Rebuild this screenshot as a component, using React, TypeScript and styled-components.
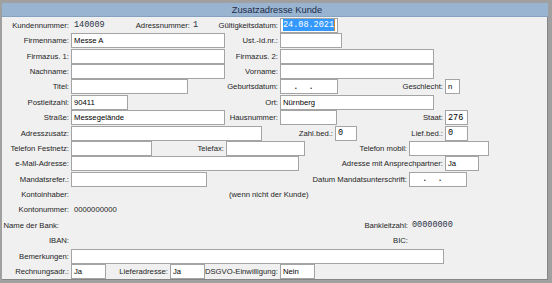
import styled, { createGlobalStyle } from 'styled-components';

const GlobalStyle = createGlobalStyle`
  html, body {
    margin: 0;
    padding: 0;
    background: #a0a0a0;
    overflow: hidden;
  }
  * {
    box-sizing: border-box;
  }
`;

const Window = styled.div`
  width: 552px;
  height: 283px;
  padding: 3px 4px 3px 2px;
  background: #a0a0a0;
  display: flex;
  flex-direction: column;
  font-family: 'Liberation Sans', Arial, sans-serif;
  font-size: 7.7px;
  color: #1e1e1e;
`;

const TitleBar = styled.div`
  height: 14px;
  flex: none;
  display: flex;
  align-items: center;
  justify-content: center;
  background: #99b4d1;
  border-bottom: 1px solid #86a2c3;
  color: #1c2b48;
  font-size: 9.3px;
  padding-left: 4px;
`;

const Panel = styled.div`
  flex: 1;
  display: flex;
  flex-direction: column;
  background: #f0f0f0;
  border-right: 1px solid #858585;
  border-bottom: 1px solid #858585;
`;

const Row = styled.div<{ $h?: number }>`
  height: ${(p) => p.$h ?? 15.4}px;
  flex: none;
  display: flex;
  align-items: center;
`;

const Label = styled.div<{ $w: number }>`
  width: ${(p) => p.$w}px;
  flex: none;
  display: flex;
  justify-content: flex-end;
  align-items: center;
  padding-right: 2px;
  white-space: nowrap;
`;

const Value = styled.div<{ $w?: number; $mono?: boolean; $pl?: number }>`
  width: ${(p) => (p.$w ? `${p.$w}px` : 'auto')};
  flex: none;
  padding-left: ${(p) => p.$pl ?? 3}px;
  white-space: pre;
  color: ${(p) => (p.$mono ? '#2b3045' : '#1e1e1e')};
  font-family: ${(p) => (p.$mono ? "'Liberation Mono', 'Courier New', monospace" : 'inherit')};
  font-size: ${(p) => (p.$mono ? '8.5px' : 'inherit')};
`;

const Spacer = styled.div<{ $w: number }>`
  width: ${(p) => p.$w}px;
  flex: none;
`;

const Field = styled.div<{ $w: number; $mono?: boolean }>`
  width: ${(p) => p.$w}px;
  height: 15px;
  flex: none;
  display: flex;
  align-items: center;
  padding-left: 2px;
  background: #ffffff;
  border: 1px solid #a4a4a4;
  white-space: pre;
  overflow: hidden;
  color: #000000;
  font-family: ${(p) => (p.$mono ? "'Liberation Mono', 'Courier New', monospace" : 'inherit')};
  font-size: ${(p) => (p.$mono ? '8.5px' : 'inherit')};
`;

const Selected = styled.span`
  display: inline-block;
  line-height: 12px;
  background: #3399ff;
  color: #ffffff;
`;

const Caret = styled.span`
  display: inline-block;
  width: 1px;
  height: 12px;
  background: #cc8a3c;
`;

const DateMask = '  .  .    ';

export default function App() {
  return (
    <>
      <GlobalStyle />
      <Window>
        <TitleBar>Zusatzadresse Kunde</TitleBar>
        <Panel>
          <Row $h={16}>
            <Label $w={69}>Kundennummer:</Label>
            <Value $w={59} $mono>140009</Value>
            <Label $w={62}>Adressnummer:</Label>
            <Value $w={18} $mono $pl={1}>1</Value>
            <Label $w={70}>Gültigkeitsdatum:</Label>
            <Field $w={58} $mono>
              <Selected>24.08.2021</Selected>
              <Caret />
            </Field>
          </Row>

          <Row>
            <Label $w={69}>Firmenname:</Label>
            <Field $w={154}>Messe A</Field>
            <Label $w={55}>Ust.-Id.nr.:</Label>
            <Field $w={62} />
          </Row>

          <Row>
            <Label $w={69}>Firmazus. 1:</Label>
            <Field $w={154} />
            <Label $w={55}>Firmazus. 2:</Label>
            <Field $w={154} />
          </Row>

          <Row>
            <Label $w={69}>Nachname:</Label>
            <Field $w={154} />
            <Label $w={55}>Vorname:</Label>
            <Field $w={154} />
          </Row>

          <Row>
            <Label $w={69}>Titel:</Label>
            <Field $w={117} />
            <Label $w={92}>Geburtsdatum:</Label>
            <Field $w={58} $mono>{DateMask}</Field>
            <Label $w={107}>Geschlecht:</Label>
            <Field $w={15}>n</Field>
          </Row>

          <Row>
            <Label $w={69}>Postleitzahl:</Label>
            <Field $w={57}>90411</Field>
            <Label $w={152}>Ort:</Label>
            <Field $w={154}>Nürnberg</Field>
          </Row>

          <Row>
            <Label $w={69}>Straße:</Label>
            <Field $w={154}>Messegelände</Field>
            <Label $w={55}>Hausnummer:</Label>
            <Field $w={57} />
            <Label $w={108}>Staat:</Label>
            <Field $w={23} $mono>276</Field>
          </Row>

          <Row>
            <Label $w={69}>Adresszusatz:</Label>
            <Field $w={191} />
            <Label $w={73}>Zahl.bed.:</Label>
            <Field $w={22} $mono>0</Field>
            <Label $w={88}>Lief.bed.:</Label>
            <Field $w={23} $mono>0</Field>
          </Row>

          <Row>
            <Label $w={69}>Telefon Festnetz:</Label>
            <Field $w={81} />
            <Label $w={74}>Telefax:</Label>
            <Field $w={79} />
            <Label $w={104}>Telefon mobil:</Label>
            <Field $w={80} />
          </Row>

          <Row>
            <Label $w={69}>e-Mail-Adresse:</Label>
            <Field $w={228} />
            <Label $w={146}>Adresse mit Ansprechpartner:</Label>
            <Field $w={34}>Ja</Field>
          </Row>

          <Row>
            <Label $w={69}>Mandatsrefer.:</Label>
            <Field $w={136} />
            <Label $w={202}>Datum Mandatsunterschrift:</Label>
            <Field $w={58} $mono>{DateMask}</Field>
          </Row>

          <Row>
            <Label $w={69}>Kontoinhaber:</Label>
            <Spacer $w={158} />
            <Value $pl={0}>(wenn nicht der Kunde)</Value>
          </Row>

          <Row>
            <Label $w={69}>Kontonummer:</Label>
            <Value>0000000000</Value>
          </Row>

          <Row>
            <Label $w={59}>Name der Bank:</Label>
            <Label $w={349}>Bankleitzahl:</Label>
            <Value $mono $pl={2}>00000000</Value>
          </Row>

          <Row>
            <Label $w={69}>IBAN:</Label>
            <Label $w={339}>BIC:</Label>
          </Row>

          <Row>
            <Label $w={69}>Bemerkungen:</Label>
            <Field $w={373} />
          </Row>

          <Row>
            <Label $w={69}>Rechnungsadr.:</Label>
            <Field $w={35}>Ja</Field>
            <Label $w={64}>Lieferadresse:</Label>
            <Field $w={35}>Ja</Field>
            <Label $w={75}>DSGVO-Einwilligung:</Label>
            <Field $w={35}>Nein</Field>
          </Row>
        </Panel>
      </Window>
    </>
  );
}
